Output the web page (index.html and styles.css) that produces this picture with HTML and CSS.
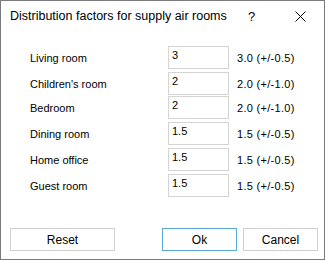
FILE: index.html
```html
<!DOCTYPE html>
<html lang="en">
<head>
    <meta charset="UTF-8">
    <meta name="viewport" content="width=device-width, initial-scale=1.0">
    <title>Distribution factors for supply air rooms</title>
    <link rel="stylesheet" href="styles.css">
</head>
<body>
    <div class="dialog">
        <div class="titlebar">
            <span class="title">Distribution factors for supply air rooms</span>
            <span class="help">?</span>
            <span class="close">
                <svg width="11" height="11" viewBox="0 0 11 11">
                    <path d="M0.5 0.5 L10.5 10.5 M10.5 0.5 L0.5 10.5" stroke="#000" stroke-width="1" fill="none"/>
                </svg>
            </span>
        </div>

        <div class="rows">
            <div class="row">
                <label for="living">Living room</label>
                <input type="text" id="living" class="factor" value="3">
                <span class="range">3.0 (+/-0.5)</span>
            </div>
            <div class="row">
                <label for="children">Children's room</label>
                <input type="text" id="children" class="factor" value="2">
                <span class="range">2.0 (+/-1.0)</span>
            </div>
            <div class="row tight">
                <label for="bedroom">Bedroom</label>
                <input type="text" id="bedroom" class="factor" value="2">
                <span class="range">2.0 (+/-1.0)</span>
            </div>
            <div class="row">
                <label for="dining">Dining room</label>
                <input type="text" id="dining" class="factor" value="1.5">
                <span class="range">1.5 (+/-0.5)</span>
            </div>
            <div class="row">
                <label for="office">Home office</label>
                <input type="text" id="office" class="factor" value="1.5">
                <span class="range">1.5 (+/-0.5)</span>
            </div>
            <div class="row">
                <label for="guest">Guest room</label>
                <input type="text" id="guest" class="factor" value="1.5">
                <span class="range">1.5 (+/-0.5)</span>
            </div>
        </div>

        <div class="buttons">
            <button class="reset-btn">Reset</button>
            <button class="ok-btn">Ok</button>
            <button class="cancel-btn">Cancel</button>
        </div>
    </div>
</body>
</html>
```

FILE: styles.css
```css
body {
    margin: 0;
    font-family: "Liberation Sans", Arial, sans-serif;
    background: #fff;
}
.dialog {
    width: 325px;
    height: 260px;
    box-sizing: border-box;
    border: 1px solid #7a7a7a;
    background: #fff;
    display: flex;
    flex-direction: column;
    color: #000;
}
.titlebar {
    height: 30px;
    display: flex;
    align-items: center;
    font-size: 12.5px;
}
.title {
    margin-left: 9px;
    flex: 1;
}
.help {
    width: 10px;
    margin-right: 37px;
    font-size: 13px;
}
.close {
    width: 11px;
    height: 11px;
    margin-right: 18px;
    display: flex;
}
.rows {
    margin-top: 15px;
    padding-left: 29px;
}
.row {
    display: flex;
    align-items: center;
    height: 23px;
    margin-top: 3px;
    font-size: 11px;
}
.row:first-child {
    margin-top: 0;
}
.row.tight {
    margin-top: 1px;
}
.row label {
    width: 138px;
}
.range {
    letter-spacing: 0.3px;
}
.factor {
    width: 61px;
    height: 23px;
    box-sizing: border-box;
    border: 1px solid #d4d4d4;
    padding: 1px 3px 7px;
    margin: 0 8px 0 0;
    font-family: inherit;
    font-size: 11px;
    line-height: 13px;
    color: #000;
    outline: none;
}
.buttons {
    margin-top: auto;
    display: flex;
    gap: 6px;
    padding: 0 6px 8px 9px;
}
.buttons button {
    width: 75px;
    height: 23px;
    background: #fff;
    border: 1px solid #d0d0d0;
    font-family: inherit;
    font-size: 12px;
    color: #000;
    padding: 0;
}
.buttons .reset-btn {
    width: 105px;
    margin-right: auto;
}
.buttons .ok-btn {
    border-color: #5aa8dc;
}
```
